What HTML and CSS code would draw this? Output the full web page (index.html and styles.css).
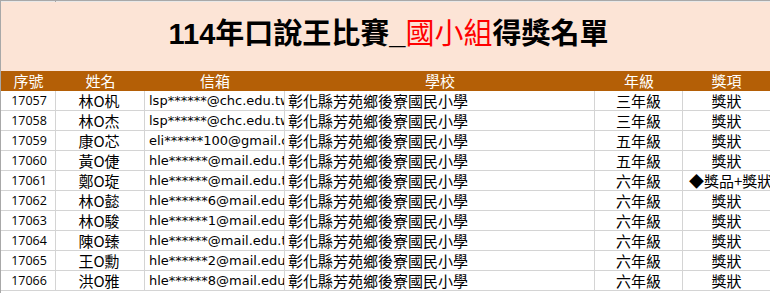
FILE: index.html
```html
<!DOCTYPE html>
<html lang="zh-Hant">
<head>
<meta charset="utf-8">
<title>114年口說王比賽 國小組得獎名單</title>
<link rel="stylesheet" href="styles.css">
</head>
<body>
<div class="sheet">
  <div class="top-strip">
    <span class="tick t1"></span>
  </div>
  <div class="title-band">
    <h1 class="title">114年口說王比賽_<span class="red">國小組</span>得獎名單</h1>
  </div>
  <div class="grid">
    <div class="hd">序號</div><div class="hd">姓名</div><div class="hd">信箱</div><div class="hd">學校</div><div class="hd">年級</div><div class="hd">獎項</div>

    <div class="c num">17057</div><div class="c name">林O杋</div><div class="c mail">lsp******@chc.edu.tw</div><div class="c school">彰化縣芳苑鄉後寮國民小學</div><div class="c grade">三年級</div><div class="c award">獎狀</div>
    <div class="c num">17058</div><div class="c name">林O杰</div><div class="c mail">lsp******@chc.edu.tw</div><div class="c school">彰化縣芳苑鄉後寮國民小學</div><div class="c grade">三年級</div><div class="c award">獎狀</div>
    <div class="c num">17059</div><div class="c name">康O芯</div><div class="c mail">eli******100@gmail.com</div><div class="c school">彰化縣芳苑鄉後寮國民小學</div><div class="c grade">五年級</div><div class="c award">獎狀</div>
    <div class="c num">17060</div><div class="c name">黃O倢</div><div class="c mail">hle******@mail.edu.tw</div><div class="c school">彰化縣芳苑鄉後寮國民小學</div><div class="c grade">五年級</div><div class="c award">獎狀</div>
    <div class="c num">17061</div><div class="c name">鄭O琁</div><div class="c mail">hle******@mail.edu.tw</div><div class="c school">彰化縣芳苑鄉後寮國民小學</div><div class="c grade">六年級</div><div class="c award wide">◆獎品+獎狀</div>
    <div class="c num">17062</div><div class="c name">林O懿</div><div class="c mail">hle******6@mail.edu.tw</div><div class="c school">彰化縣芳苑鄉後寮國民小學</div><div class="c grade">六年級</div><div class="c award">獎狀</div>
    <div class="c num">17063</div><div class="c name">林O駿</div><div class="c mail">hle******1@mail.edu.tw</div><div class="c school">彰化縣芳苑鄉後寮國民小學</div><div class="c grade">六年級</div><div class="c award">獎狀</div>
    <div class="c num">17064</div><div class="c name">陳O臻</div><div class="c mail">hle******@mail.edu.tw</div><div class="c school">彰化縣芳苑鄉後寮國民小學</div><div class="c grade">六年級</div><div class="c award">獎狀</div>
    <div class="c num">17065</div><div class="c name">王O勳</div><div class="c mail">hle******2@mail.edu.tw</div><div class="c school">彰化縣芳苑鄉後寮國民小學</div><div class="c grade">六年級</div><div class="c award">獎狀</div>
    <div class="c num">17066</div><div class="c name">洪O雅</div><div class="c mail">hle******8@mail.edu.tw</div><div class="c school">彰化縣芳苑鄉後寮國民小學</div><div class="c grade">六年級</div><div class="c award">獎狀</div>
  </div>
</div>
</body>
</html>
```

FILE: styles.css
```css
html, body {
  margin: 0;
  padding: 0;
  background: #ffffff;
}

.sheet {
  width: 770px;
  height: 293px;
  overflow: hidden;
  border-left: 1px solid #a8a8a8;
  box-sizing: border-box;
  font-family: "Noto Sans CJK TC", sans-serif;
  color: #000;
}

.top-strip {
  position: relative;
  height: 2px;
  border-top: 1px solid #a8a8a8;
  box-sizing: border-box;
  background: #e8e8e8;
}

.tick {
  position: absolute;
  top: 0;
  width: 1px;
  height: 1px;
  background: #a8a8a8;
}
.t1 { left: 54px; }

.title-band {
  height: 69px;
  background: #fce4d6;
  display: flex;
  align-items: center;
  justify-content: center;
}

.title {
  margin: 0;
  padding: 0 0 4px 6px;
  font-family: "Liberation Sans", "Noto Sans CJK TC", sans-serif;
  font-weight: 700;
  font-size: 29px;
  line-height: 1;
  letter-spacing: 0;
}

.red { color: #ff0000; font-weight: 400; }

.grid {
  display: grid;
  grid-template-columns: 55px 89px 140px 310px 88px 87px;
  grid-auto-rows: 20px;
}

.hd {
  background: #b45f06;
  color: #ffffff;
  font-size: 15px;
  line-height: 20px;
  text-align: center;
  white-space: nowrap;
}

.c {
  box-sizing: border-box;
  border-right: 1px solid #d4d4d4;
  border-bottom: 1px solid #d4d4d4;
  font-size: 15px;
  line-height: 19px;
  white-space: nowrap;
  overflow: hidden;
}

.num {
  font-family: "Open Sans", sans-serif;
  font-size: 12.5px;
  text-align: center;
  padding-left: 2px;
}

.name {
  text-align: center;
  padding-right: 2px;
}

.mail {
  font-family: "DejaVu Sans", "Noto Sans CJK TC", sans-serif;
  font-size: 13px;
  padding-left: 4px;
  text-overflow: clip;
}

.school {
  padding-left: 3px;
}

.grade {
  text-align: center;
}

.award {
  text-align: center;
  border-right: none;
}

.wide {
  overflow: visible;
  text-align: left;
  padding-left: 6px;
}
```
